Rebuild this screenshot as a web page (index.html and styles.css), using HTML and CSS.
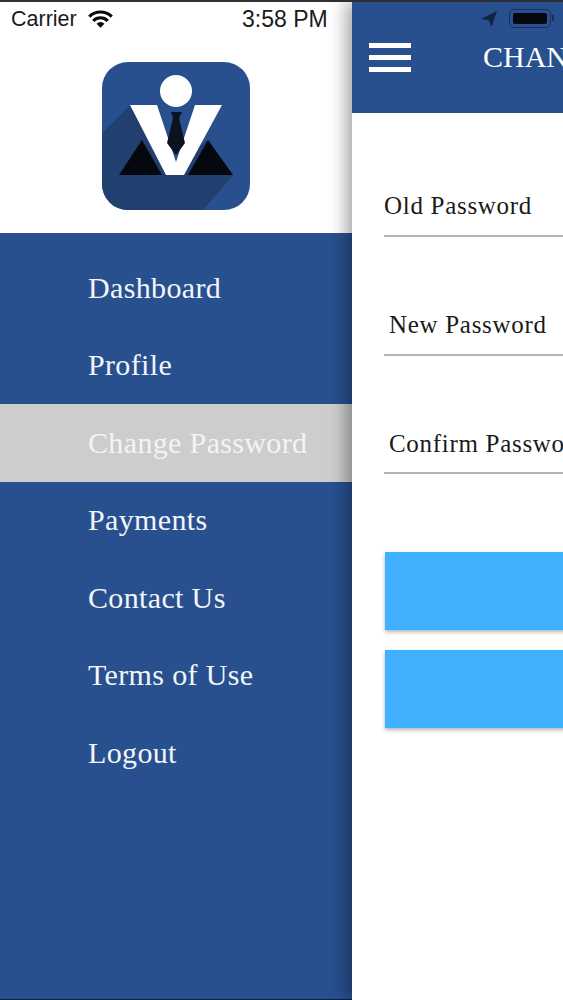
FILE: index.html
```html
<!DOCTYPE html>
<html lang="en">
<head>
  <meta charset="UTF-8" />
  <title>Change Password</title>
  <meta name="viewport" content="width=device-width, initial-scale=1.0" />
  <link rel="stylesheet" href="styles.css">
</head>
<body>
  <div class="screen">
    <aside class="drawer">
      <div class="drawer-head">
        <div class="status-left">
          <span class="carrier">Carrier</span>
          <svg class="wifi" viewBox="0 0 24 17" width="25" height="18">
            <path d="M12 17 8.2 13a5.4 5.4 0 0 1 7.6 0Z" fill="#0a0a0a"/>
            <path d="M1.2 6.2a15.4 15.4 0 0 1 21.6 0M5 10.2a10 10 0 0 1 14 0" fill="none" stroke="#0a0a0a" stroke-width="3"/>
          </svg>
          <span class="clock">3:58 PM</span>
        </div>
        <svg class="logo" viewBox="0 0 148 148" width="148" height="148">
          <defs>
            <clipPath id="logoClip"><rect width="148" height="148" rx="26"/></clipPath>
          </defs>
          <g clip-path="url(#logoClip)">
            <rect width="148" height="148" fill="#28508f"/>
            <polygon points="28,43 0,72 0,148 101,148 131,113 106,78 74,100" fill="#213f6f"/>
          </g>
          <polygon points="17,113 40,78 60,113" fill="#05080f"/>
          <polygon points="131,113 106,78 86,113" fill="#05080f"/>
          <polygon points="28,43 55,43 74,100 93,43 120,43 82,113 64,113" fill="#fff"/>
          <polygon points="69,50 80,50 77,56 83,81 74,93 65,81 71,56" fill="#0b1220"/>
          <circle cx="74" cy="29" r="16" fill="#fff"/>
        </svg>
      </div>
      <nav class="menu">
        <a class="menu-item">Dashboard</a>
        <a class="menu-item">Profile</a>
        <a class="menu-item active">Change Password</a>
        <a class="menu-item">Payments</a>
        <a class="menu-item">Contact Us</a>
        <a class="menu-item">Terms of Use</a>
        <a class="menu-item">Logout</a>
      </nav>
    </aside>
    <main class="panel">
      <header class="topbar">
        <div class="status-right">
          <svg class="arrow" viewBox="0 0 16 16" width="16" height="16">
            <path d="M16 1 0 9l7.5 1L10.5 17Z" fill="#10233f"/>
          </svg>
          <div class="battery"><span class="battery-fill"></span></div>
          <span class="battery-nub"></span>
        </div>
        <div class="title-row">
          <div class="burger"><span></span><span></span><span></span></div>
          <h1>CHANGE PASSWORD</h1>
        </div>
      </header>
      <form class="form">
        <div class="field one"><span class="label first">Old Password</span></div>
        <div class="field two"><span class="label">New Password</span></div>
        <div class="field three"><span class="label">Confirm Password</span></div>
        <div class="btn"></div>
        <div class="btn"></div>
      </form>
    </main>
  </div>
</body>
</html>
```

FILE: styles.css
```css
html, body {
  margin: 0;
  padding: 0;
  background: #fff;
}
.screen {
  display: flex;
  width: 563px;
  height: 1000px;
  overflow: hidden;
  border-top: 2px solid #2c2f35;
  box-sizing: border-box;
}
.drawer {
  width: 352px;
  flex-shrink: 0;
  display: flex;
  flex-direction: column;
}
.drawer-head {
  height: 231px;
  background: #fff;
}
.status-left {
  display: flex;
  align-items: center;
  height: 34px;
  padding-left: 11px;
  font-family: "Liberation Sans", sans-serif;
  font-size: 21.5px;
  color: #1a1a1a;
}
.carrier {
  width: 77px;
}
.clock {
  margin-left: 129px;
  font-size: 23px;
}
.logo {
  display: block;
  margin: 26px 0 0 102px;
}
.menu {
  flex: 1;
  background: #28508f;
  border-bottom: 1px solid #10203f;
}
.menu-item {
  display: flex;
  align-items: center;
  height: 77.5px;
  padding-left: 88px;
  font-family: "Liberation Serif", serif;
  font-size: 30px;
  letter-spacing: 0.35px;
  color: #f2f5fa;
}
.menu-item:first-child {
  margin-top: 16px;
}
.menu-item.active {
  background: #cdcdcd;
  color: #f4f4f4;
}
.panel {
  position: relative;
  flex: 1;
  min-width: 0;
  background: #fff;
  box-shadow: -6px 0 16px rgba(0, 0, 0, 0.35);
}
.topbar {
  height: 111px;
  background: #28508f;
}
.status-right {
  display: flex;
  align-items: center;
  height: 32px;
  padding-left: 129px;
}
.battery {
  width: 42px;
  height: 19px;
  margin-left: 12px;
  padding: 3px;
  box-sizing: border-box;
  border: 1px solid #16305a;
  border-radius: 5px;
}
.battery-fill {
  display: block;
  height: 100%;
  background: #05080f;
  border-radius: 2px;
}
.battery-nub {
  width: 2px;
  height: 6px;
  margin-left: 1px;
  background: #16305a;
}
.title-row {
  display: flex;
  align-items: center;
  padding: 6px 0 0 17px;
}
.burger {
  display: flex;
  flex-direction: column;
  gap: 7px;
  width: 42px;
  flex-shrink: 0;
}
.burger span {
  height: 5px;
  background: #fff;
}
.title-row h1 {
  margin: 0 0 0 72px;
  font-family: "Liberation Serif", serif;
  font-size: 30px;
  font-weight: 400;
  color: #fff;
  white-space: nowrap;
}
.form {
  display: flex;
  flex-direction: column;
  padding: 0 0 0 32px;
  width: 400px;
}
.field {
  display: flex;
  align-items: center;
  border-bottom: 2px solid #b5b5b5;
  box-sizing: border-box;
  font-family: "Liberation Serif", serif;
  font-size: 25px;
  letter-spacing: 0.7px;
  color: #1a1a1a;
  white-space: nowrap;
}
.one {
  height: 123.5px;
}
.two {
  height: 119.5px;
}
.three {
  height: 117.5px;
  margin-bottom: 78.5px;
}
.label {
  padding: 60px 0 0 5px;
}
.label.first {
  padding: 64px 0 0;
}
.btn {
  height: 78px;
  margin-left: 1px;
  background: #40b0ff;
  box-shadow: 0 2px 4px rgba(0, 0, 0, 0.3);
}
.btn + .btn {
  margin-top: 20px;
}
```
